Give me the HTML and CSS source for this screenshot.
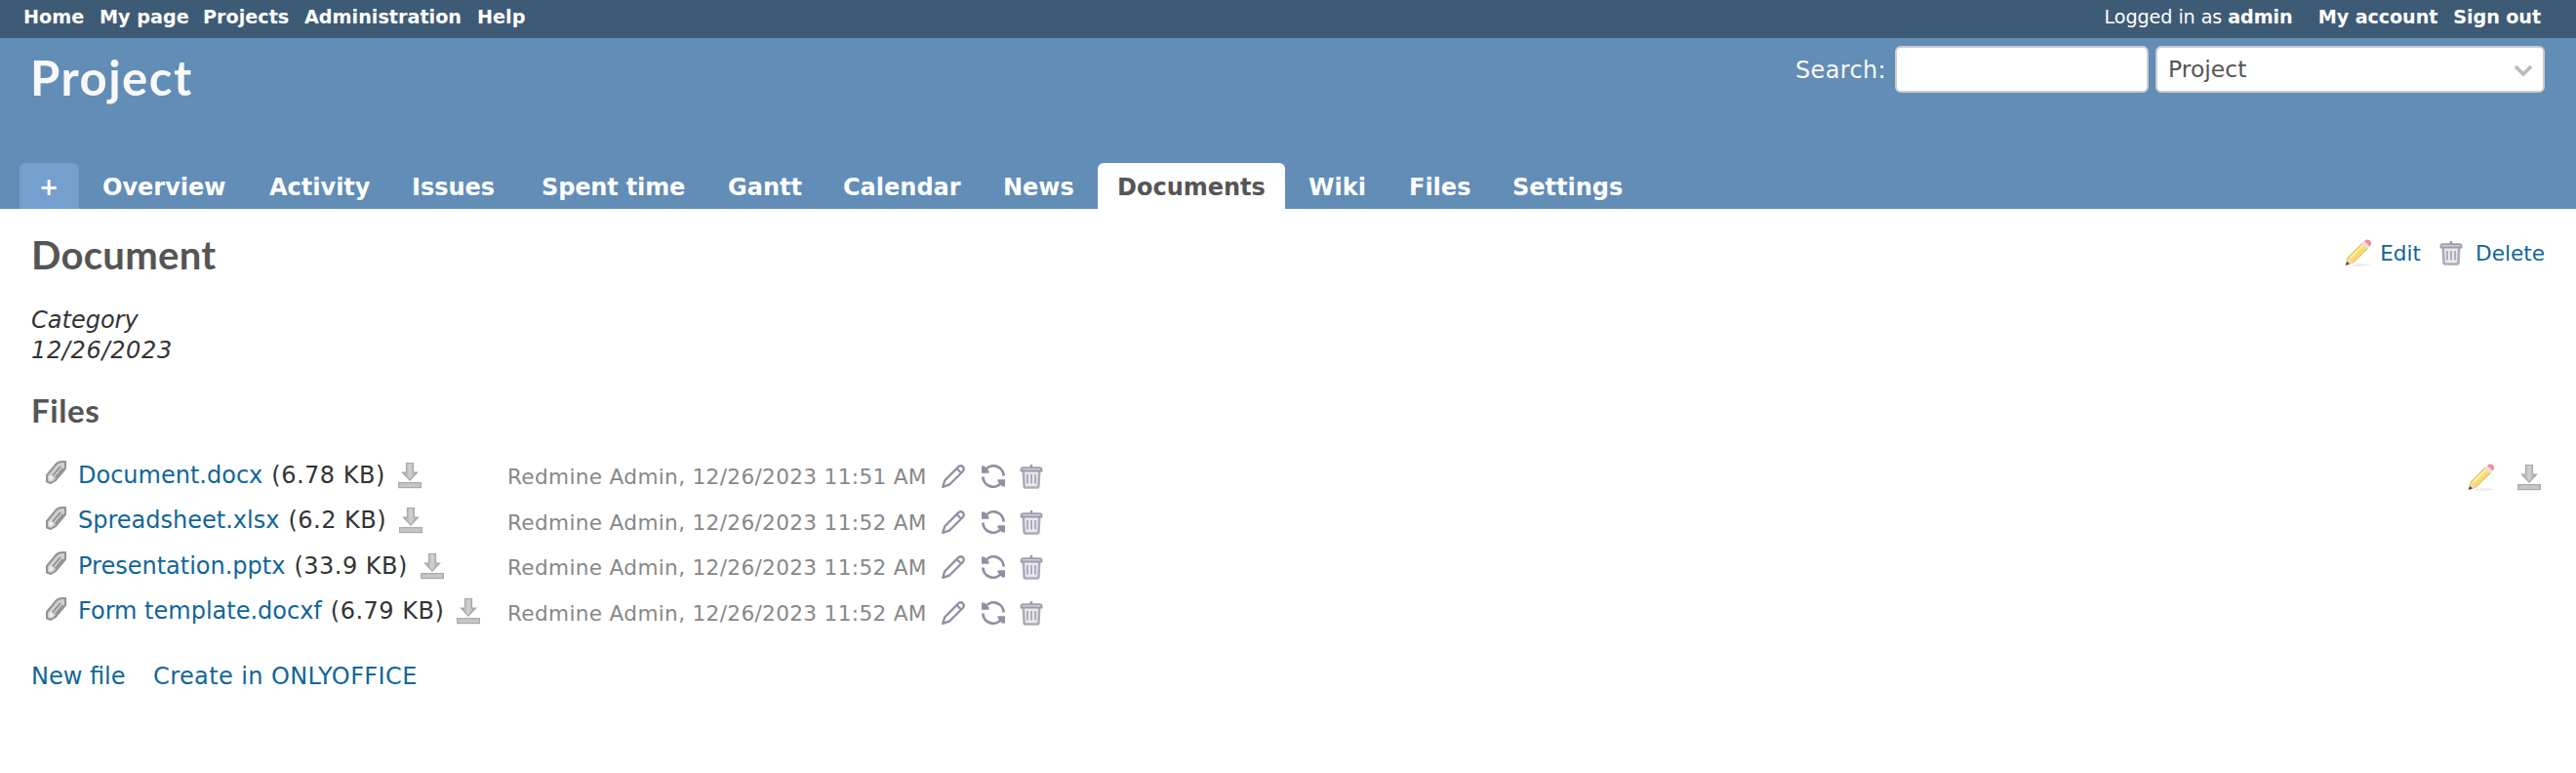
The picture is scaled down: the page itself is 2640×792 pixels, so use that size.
FILE: index.html
```html
<!DOCTYPE html>
<html lang="en">
<head>
<meta charset="utf-8">
<title>Document - Project</title>
<link rel="stylesheet" href="styles.css">
</head>
<body>
<svg class="sprite" aria-hidden="true">
  <defs>
    <linearGradient id="metal" x1="0" x2="1" y1="0" y2="0"><stop offset="0" stop-color="#a2a2a2"/><stop offset=".5" stop-color="#d2d2d2"/><stop offset="1" stop-color="#a2a2a2"/></linearGradient>
    <symbol id="clip" viewBox="0 0 24 26">
      <path d="M3 22.500V16L13 4Q15 2 19 2H22V9L11.500 21.500L7 24Z" fill="#cfcfcf" stroke="#929292" stroke-width="2" stroke-linejoin="round"/>
      <path d="M8 17.500L17 7M11.500 18.500L19.500 9" fill="none" stroke="#8c8c8c" stroke-width="1.600"/>
      <path d="M5.500 21V17.500L8 15L9.500 19L7.500 21.500Z" fill="#efefef"/>
    </symbol>
    <symbol id="download" viewBox="0 0 26 28">
      <path d="M9.500 1.500H16.500V11H20.500L13 19L5.500 11H9.500Z" fill="url(#metal)" stroke="#a8a8a8" stroke-width="1.200"/>
      <rect x="1.600" y="21.600" width="22.800" height="5" fill="#c6c6c6" stroke="#a9a9a9" stroke-width="1.200"/>
    </symbol>
    <symbol id="pencil" viewBox="0 0 30 30">
      <path d="M6 28Q15 24.500 28 27.500Q20 30 6 28Z" fill="#ececec"/>
      <path d="M4 20L19 5L24.500 10.500L9.500 25L2.500 27.500Z" fill="#f5db72" stroke="#d9b560" stroke-width="1"/>
      <path d="M6.500 20.500L20 7" stroke="#fff0a0" stroke-width="2"/>
      <path d="M4 20L9.500 25L2.500 27.500Z" fill="#f3d9b4"/>
      <path d="M3.200 24L6 26.300L1.800 27.900Z" fill="#4a4438"/>
      <path d="M18.500 5.500L21 3L26.500 8.500L24 11Z" fill="#dfe2e6"/>
      <path d="M21 3Q24 .500 27 2.500Q29.500 5.500 26.500 8.500Z" fill="#f48a93"/>
    </symbol>
    <symbol id="trash" viewBox="0 0 24 26">
      <path d="M12 1V4" stroke="#9999aa" stroke-width="2.400"/>
      <path d="M3.800 8L4.600 23Q4.800 24.500 6.500 24.500H17.500Q19.200 24.500 19.400 23L20.200 8" fill="#e9e9ee" stroke="#acacba" stroke-width="2.600"/>
      <path d="M1.500 7.500V5.500Q1.800 4.200 3.500 4.200H20.500Q22.200 4.200 22.500 5.500V7.500Z" fill="#cfcfd8" stroke="#9c9cac" stroke-width="1.800"/>
      <path d="M8 11V20.500M12 11V20.500M16 11V20.500" stroke="#a3a3b3" stroke-width="1.700"/>
    </symbol>
    <symbol id="edit" viewBox="0 0 24 24">
      <path d="M1.200 22.800L3.300 16.200L17.300 2.100Q19.700 .300 21.900 2.200Q23.700 4.300 21.900 6.700L7.800 20.700Z M15.500 4L20 8.500" fill="none" stroke="#918fa3" stroke-width="2.300" stroke-linejoin="round"/>
    </symbol>
    <symbol id="refresh" viewBox="0 0 24 24">
      <path d="M4 5.500A10.300 10.300 0 0 1 22.600 11.500M1.400 12.500A10.300 10.300 0 0 0 20 18.500" fill="none" stroke="#918fa3" stroke-width="2.800"/>
      <path d="M0 1.500V8.800H7.500V6.500L3 1.500ZM24 22.500V15.200H16.500V17.500L21 22.500Z" fill="#918fa3"/>
    </symbol>
  </defs>
</svg>

<nav class="top-menu">
  <div class="top-links"><a class="w-home">Home</a><a class="w-mypage">My page</a><a class="w-projects">Projects</a><a class="w-admin">Administration</a><a>Help</a></div>
  <div class="account"><span class="logged">Logged in as <b>admin</b></span><a>My account</a><a>Sign out</a></div>
</nav>

<header class="header">
  <div class="header-row">
    <h1 class="title">Project</h1>
    <div class="search">
      <label class="search-label" for="q">Search:</label>
      <input class="search-input" id="q" type="text">
      <div class="jump"><span>Project</span>
        <svg class="chevron" viewBox="0 0 20 12"><path d="M2 2L10 10L18 2" fill="none" stroke="#bbb" stroke-width="3.800"/></svg>
      </div>
    </div>
  </div>
  <nav class="tabs">
    <a class="tab tab-new">+</a><a class="tab t-overview">Overview</a><a class="tab t-activity">Activity</a><a class="tab t-issues">Issues</a><a class="tab t-time">Spent time</a><a class="tab t-gantt">Gantt</a><a class="tab t-calendar">Calendar</a><a class="tab t-news">News</a><a class="tab t-documents selected">Documents</a><a class="tab t-wiki">Wiki</a><a class="tab t-files">Files</a><a class="tab">Settings</a>
  </nav>
</header>

<main class="content">
  <div class="heading-row">
    <h2 class="doc-title">Document</h2>
    <div class="contextual">
      <svg class="i-pencil"><use href="#pencil"/></svg><a class="edit-link">Edit</a>
      <svg class="i-trash-lg"><use href="#trash"/></svg><a>Delete</a>
    </div>
  </div>
  <p class="info">Category<br><span class="date">12/26/2023</span></p>
  <h3 class="files-title">Files</h3>
  <div class="attachments">
    <div class="file-list">
      <div class="row"><div class="file"><svg class="i-clip"><use href="#clip"/></svg><a>Document.docx</a><span class="size">(6.78 KB)</span><svg class="i-download"><use href="#download"/></svg></div><div class="meta"><span class="author">Redmine Admin, 12/26/2023 11:51 AM</span><svg class="i-edit"><use href="#edit"/></svg><svg class="i-refresh"><use href="#refresh"/></svg><svg class="i-trash"><use href="#trash"/></svg></div></div>
      <div class="row"><div class="file"><svg class="i-clip"><use href="#clip"/></svg><a>Spreadsheet.xlsx</a><span class="size">(6.2 KB)</span><svg class="i-download"><use href="#download"/></svg></div><div class="meta"><span class="author">Redmine Admin, 12/26/2023 11:52 AM</span><svg class="i-edit"><use href="#edit"/></svg><svg class="i-refresh"><use href="#refresh"/></svg><svg class="i-trash"><use href="#trash"/></svg></div></div>
      <div class="row"><div class="file"><svg class="i-clip"><use href="#clip"/></svg><a>Presentation.pptx</a><span class="size">(33.9 KB)</span><svg class="i-download"><use href="#download"/></svg></div><div class="meta"><span class="author">Redmine Admin, 12/26/2023 11:52 AM</span><svg class="i-edit"><use href="#edit"/></svg><svg class="i-refresh"><use href="#refresh"/></svg><svg class="i-trash"><use href="#trash"/></svg></div></div>
      <div class="row"><div class="file"><svg class="i-clip"><use href="#clip"/></svg><a>Form template.docxf</a><span class="size">(6.79 KB)</span><svg class="i-download"><use href="#download"/></svg></div><div class="meta"><span class="author">Redmine Admin, 12/26/2023 11:52 AM</span><svg class="i-edit"><use href="#edit"/></svg><svg class="i-refresh"><use href="#refresh"/></svg><svg class="i-trash"><use href="#trash"/></svg></div></div>
    </div>
    <div class="bulk"><svg class="i-pencil"><use href="#pencil"/></svg><svg class="i-download-all"><use href="#download"/></svg></div>
  </div>
  <div class="links"><a class="new-file">New file</a><a class="create">Create in ONLYOFFICE</a></div>
</main>
</body>
</html>
```
FILE: styles.css
```css
* { box-sizing: border-box; }
body { margin: 0; background: #fff; color: #333; font: 24px/31px Verdana, "DejaVu Sans", sans-serif; white-space: nowrap; }
svg { display: block; flex: none; }
.sprite { position: absolute; width: 0; height: 0; }
h1, h2, h3, p { margin: 0; }
h1, h2, h3 { font-family: "Trebuchet MS", Lato, sans-serif; font-weight: bold; color: #555; }
a { color: #169; }

.top-menu { display: flex; justify-content: space-between; height: 39px; padding: 0 36px 0 24px; background: #3e5b76; color: #fff; font-size: 19.2px; line-height: 35px; }
.top-menu a { color: #fff; font-weight: bold; }
.top-links, .account { display: flex; }
.w-home { width: 78px; }
.w-mypage { width: 106px; }
.w-projects { width: 104px; }
.w-admin { width: 177px; }
.account { gap: 16px; letter-spacing: -.1px; }
.logged { margin-right: 10px; }

.header { display: flex; flex-direction: column; justify-content: space-between; height: 175px; background: #628db6; color: #f8f8f8; }
.header-row { display: flex; justify-content: space-between; align-items: flex-start; padding: 8px 32px 0 31px; }
.title { color: #f8f8f8; font-size: 49px; line-height: 64px; letter-spacing: 1.5px; }
.search { display: flex; align-items: center; }
.search-label { padding-top: 2px; margin-right: 9px; letter-spacing: .35px; }
.search-input, .jump { height: 48px; border: 2px solid #ccc; border-radius: 6px; background: #fff; }
.search-input { width: 260px; margin: 0 7px 0 0; }
.jump { display: flex; align-items: center; justify-content: space-between; width: 399px; padding: 1px 10px 0 11px; color: #555; font-size: 23.5px; }
.chevron { width: 20px; height: 12px; }

.tabs { display: flex; gap: 4px; padding-left: 20px; }
.tab { height: 47px; padding: 0 20px; border-radius: 6px 6px 0 0; color: #fff; font-weight: bold; line-height: 50px; }
.tab-new { width: 61px; background: #759fcf; }
.t-overview { width: 167px; }
.t-activity { width: 142px; }
.t-issues { width: 129px; }
.t-time { width: 187px; letter-spacing: -.15px; }
.t-gantt { width: 114px; }
.t-calendar { width: 160px; }
.t-news { width: 113px; }
.t-documents { width: 192px; }
.t-wiki { width: 99px; }
.t-files { width: 102px; }
.selected { background: #fff; color: #555; }

.content { padding: 23px 32px 0 32px; }
.heading-row { display: flex; justify-content: space-between; }
.doc-title { font-size: 40px; line-height: 48px; letter-spacing: .3px; }
.contextual { display: flex; align-items: center; height: 44px; font-size: 21.6px; }
.i-pencil { width: 30px; height: 30px; }
.i-trash-lg { width: 24px; height: 26px; margin-right: 13px; }
.edit-link { margin: 0 19px 0 7px; }
.info { padding-top: 28px; font-style: italic; }
.date { letter-spacing: .65px; }
.files-title { padding-top: 26px; font-size: 33px; line-height: 39px; letter-spacing: .6px; }

.attachments { display: flex; justify-content: space-between; padding-top: 23px; }
.row { display: flex; height: 46.5px; }
.file { display: flex; align-items: center; width: 488px; padding-left: 13px; }
.file a { padding-top: 2px; }
.i-clip { width: 24px; height: 26px; margin: -4px 11px 0 0; }
.size { padding-top: 2px; margin-left: 9px; letter-spacing: .5px; }
.i-download { width: 26px; height: 28px; margin: 1px 0 0 12px; }
.meta { display: flex; align-items: center; padding-top: 4px; color: #888; font-size: 21.6px; letter-spacing: .34px; }
.author { width: 445px; padding-top: 1px; }
.i-edit { width: 24px; height: 24px; }
.i-refresh { width: 24px; height: 24px; margin-left: 17px; }
.i-trash { width: 24px; height: 26px; margin-left: 15px; }
.bulk { display: flex; align-items: center; height: 51px; gap: 21px; padding-right: 3px; }
.i-download-all { width: 26px; height: 28px; }

.links { display: flex; padding-top: 29px; }
.new-file { width: 125px; }
.create { letter-spacing: .4px; }
```
